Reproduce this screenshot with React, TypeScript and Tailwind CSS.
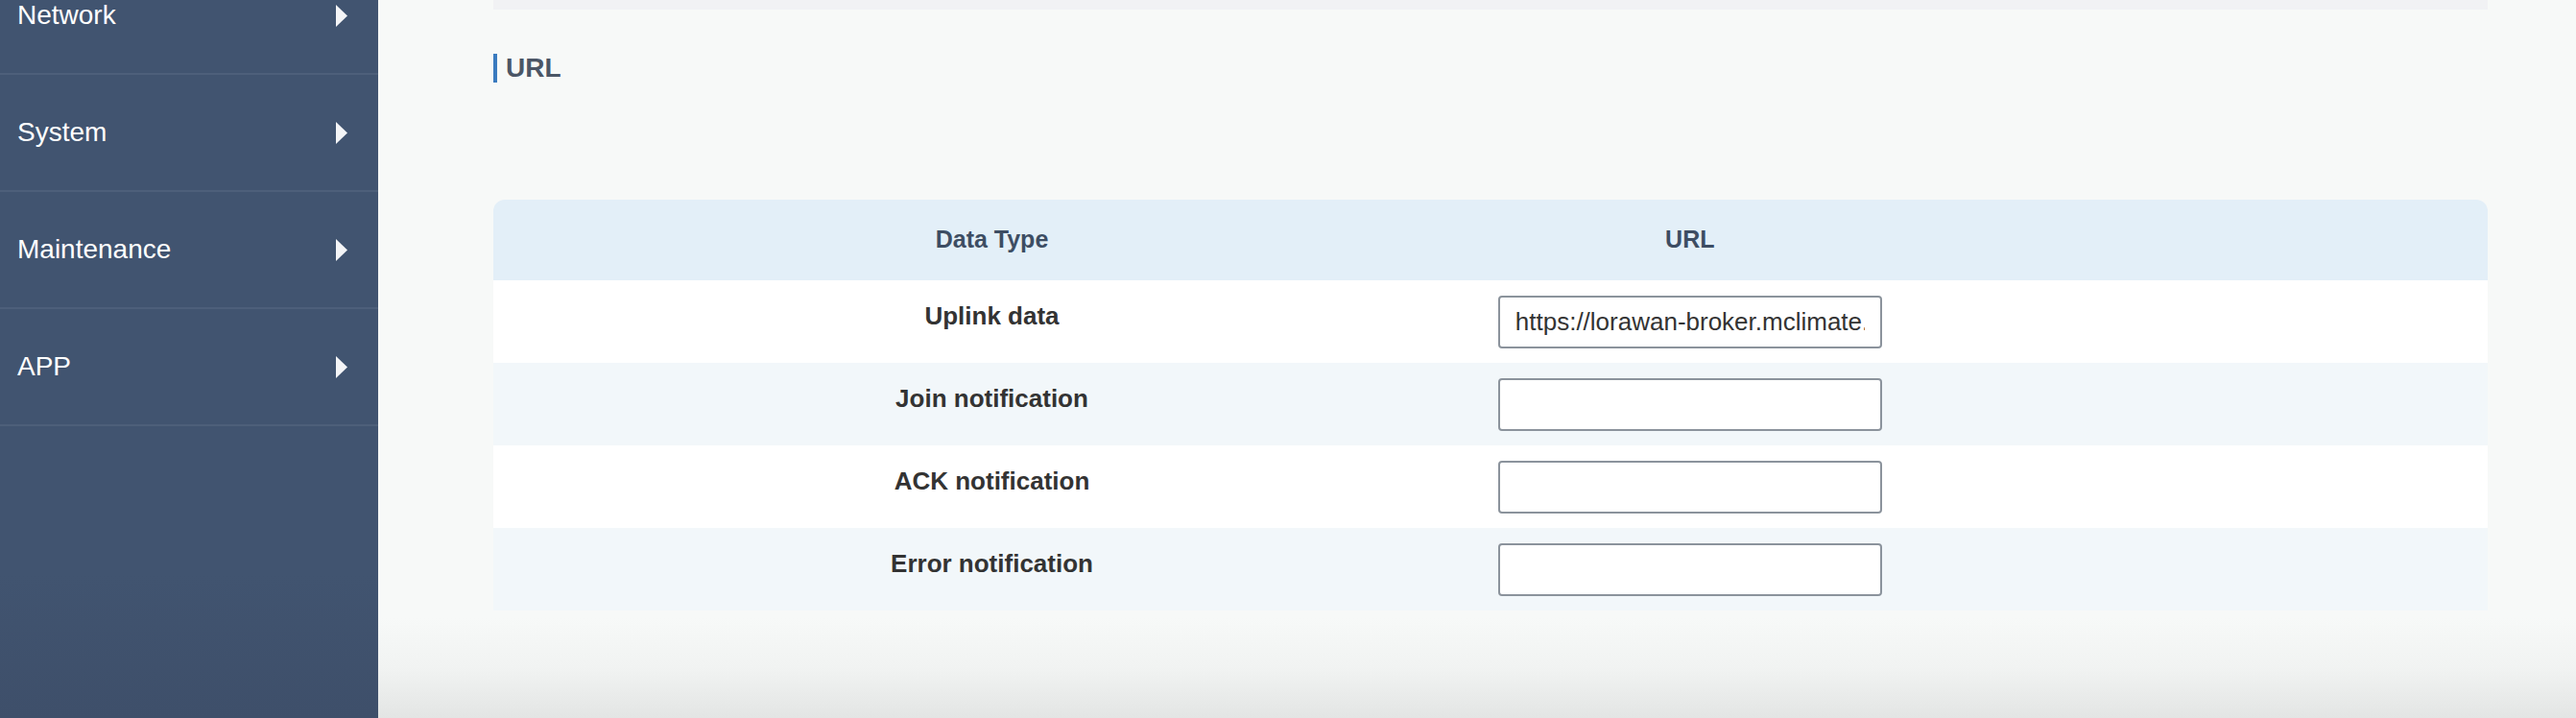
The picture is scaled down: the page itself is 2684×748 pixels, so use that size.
import React from "react";

const menu = ["Network", "System", "Maintenance", "APP"];

const rows = [
  { label: "Uplink data", value: "https://lorawan-broker.mclimate.eu/api/uplink" },
  { label: "Join notification", value: "" },
  { label: "ACK notification", value: "" },
  { label: "Error notification", value: "" },
];

function Arrow() {
  return (
    <svg width="12" height="23" viewBox="0 0 12 23" className="shrink-0">
      <path d="M0 0 L12 11.5 L0 23 Z" fill="#f4f5f7" />
    </svg>
  );
}

export default function App() {
  return (
    <div
      className="flex h-[748px] w-[2684px] overflow-hidden"
      style={{ fontFamily: '"Liberation Sans", Arial, Helvetica, sans-serif' }}
    >
      {/* sidebar */}
      <aside className="w-[394px] shrink-0 bg-[linear-gradient(to_bottom,#415470_80%,#3e4f6a)]">
        <ul className="-mt-[44px]">
          {menu.map((item) => (
            <li
              key={item}
              className="flex h-[122px] items-center justify-between border-b-2 border-[#4d5f7a] pl-[18px] pr-[32px] text-[28px] text-white"
            >
              <span>{item}</span>
              <Arrow />
            </li>
          ))}
        </ul>
      </aside>

      {/* main */}
      <main className="flex-1 bg-[linear-gradient(to_bottom,#f7f9f8_86%,#f1f3f2_93%,#e3e5e4)] pl-[120px] pr-[92px]">
        <div className="h-[10px] bg-[#f1f2f4]" />

        <div className="mt-[46px] border-l-4 border-[#3a7bbf] pl-[9px] text-[28px] font-bold leading-[30px] text-[#4b5666]">
          URL
        </div>

        <div className="mt-[122px] overflow-hidden rounded-t-[12px]">
          <table className="w-full table-fixed border-collapse">
            <colgroup>
              <col className="w-1/2" />
              <col className="w-1/5" />
              <col />
            </colgroup>
            <thead>
              <tr className="h-[84px] bg-[#e3eff8] text-[25px] font-bold text-[#3d4d63]">
                <th className="text-center align-middle">Data Type</th>
                <th className="text-center align-middle">URL</th>
                <th />
              </tr>
            </thead>
            <tbody>
              {rows.map((row, i) => (
                <tr
                  key={row.label}
                  className={`h-[86px] ${i % 2 === 0 ? "bg-white" : "bg-[#f2f7fa]"}`}
                >
                  <td className="pt-[22px] text-center align-top text-[26px] font-bold leading-[30px] text-[#333333]">
                    {row.label}
                  </td>
                  <td className="align-middle">
                    <div className="flex justify-center">
                      <input
                        type="text"
                        defaultValue={row.value}
                        className="h-[55px] w-[400px] rounded-[4px] border-2 border-[#8b939c] bg-white px-[16px] text-[26px] text-[#333333] outline-none"
                      />
                    </div>
                  </td>
                  <td />
                </tr>
              ))}
            </tbody>
          </table>
        </div>
      </main>
    </div>
  );
}
